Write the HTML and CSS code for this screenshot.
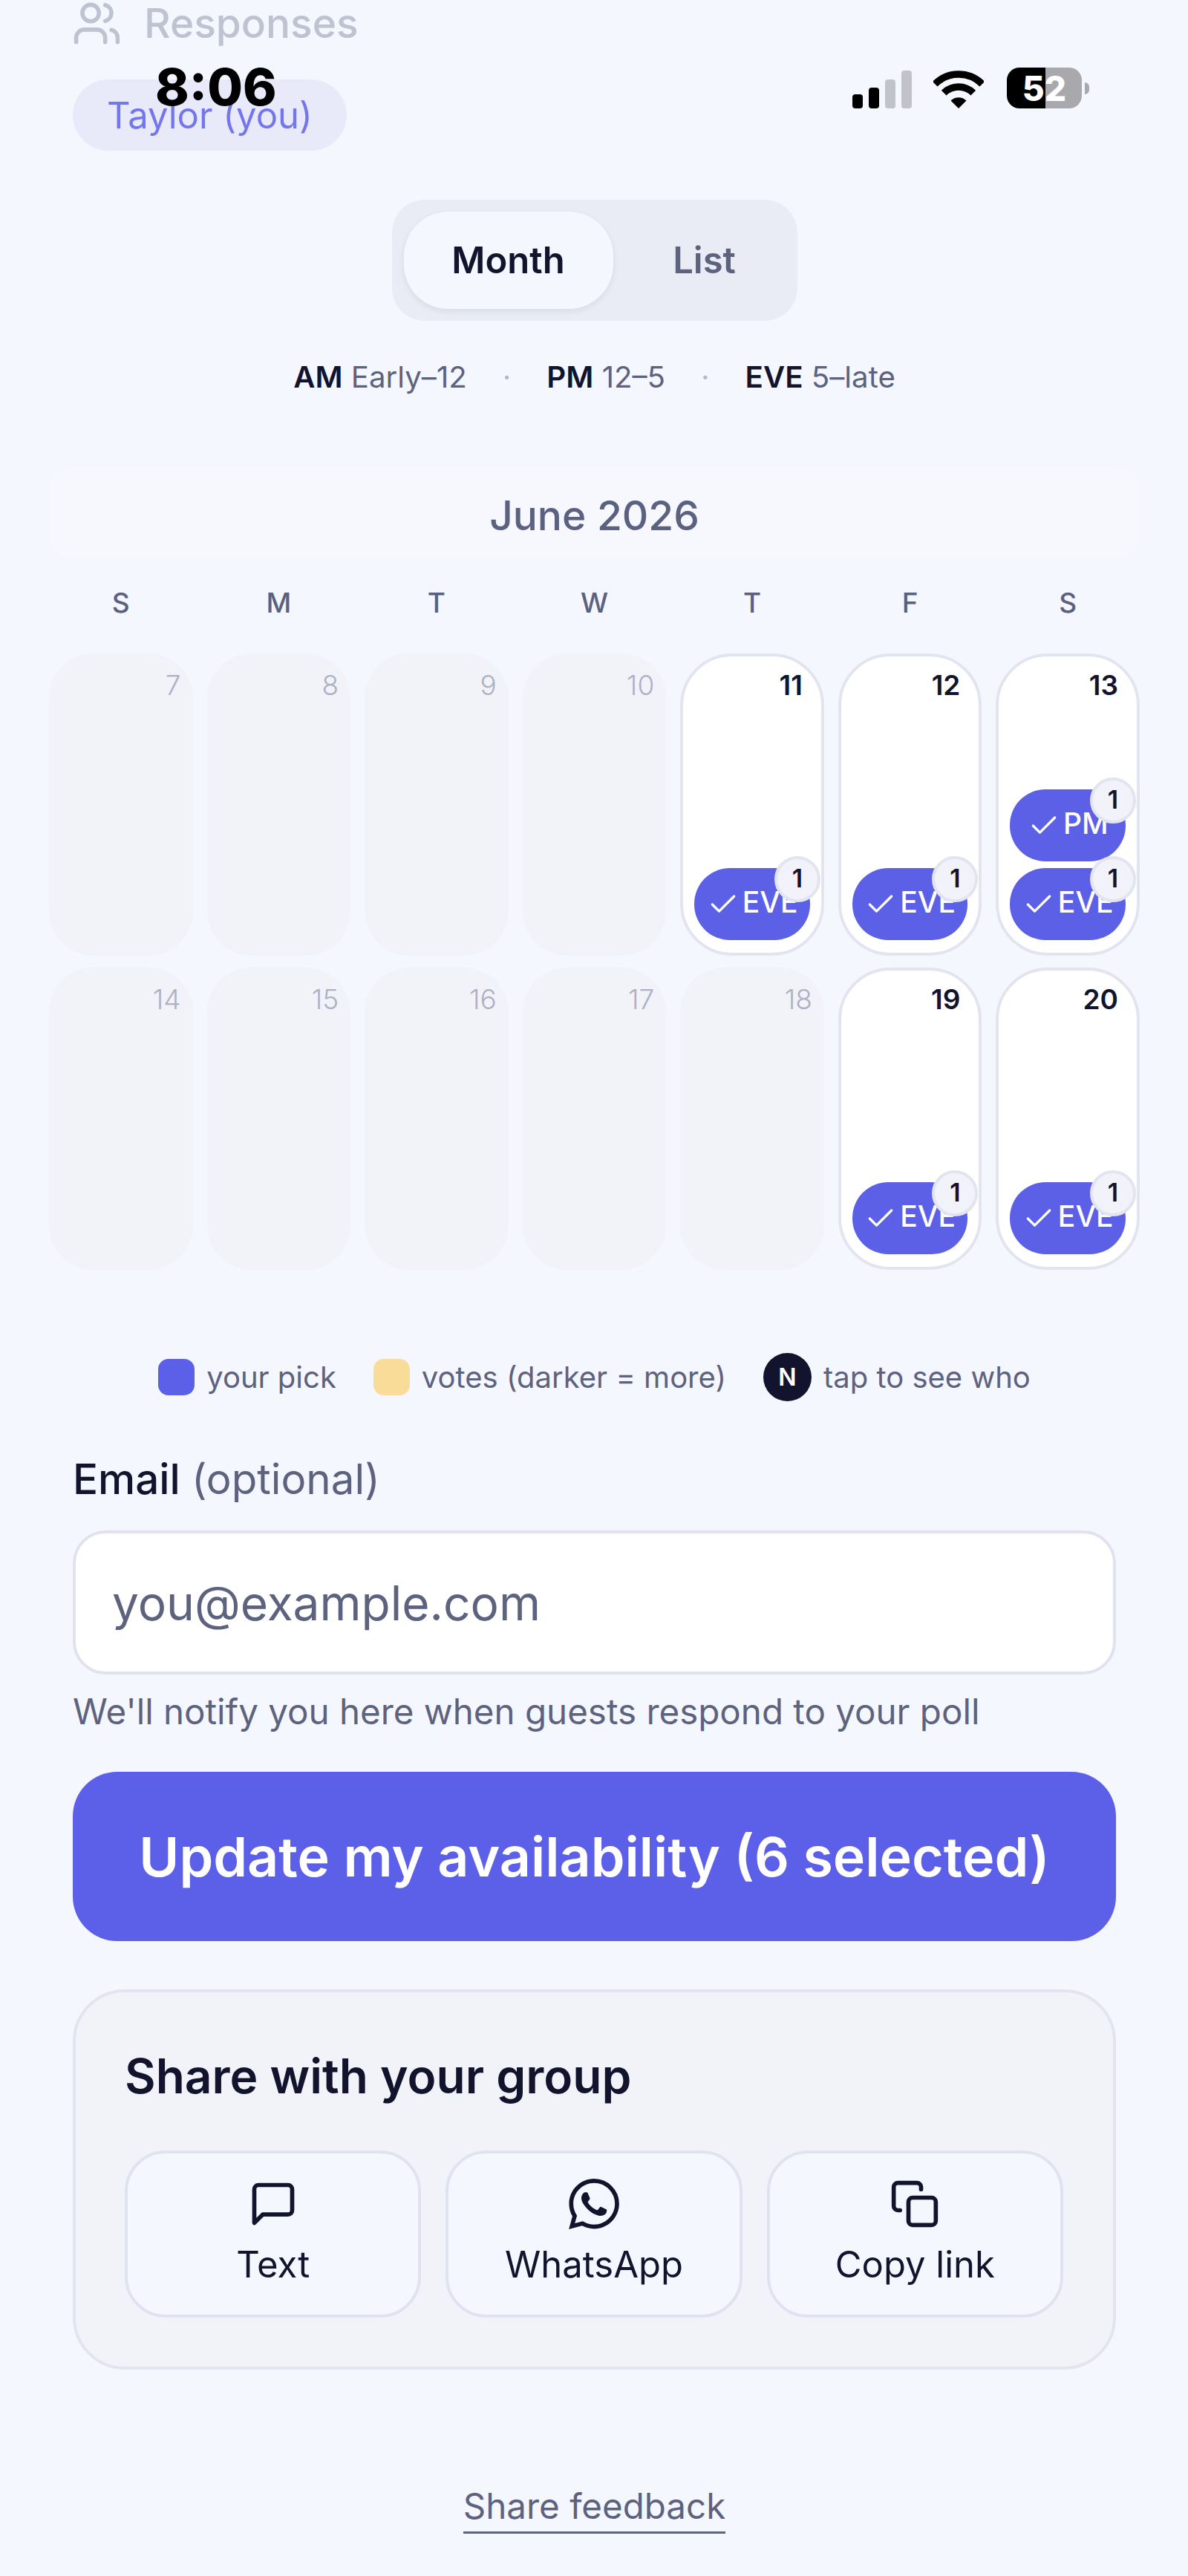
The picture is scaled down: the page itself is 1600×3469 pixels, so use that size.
FILE: index.html
```html
<!DOCTYPE html>
<html lang="en">
<head>
    <meta charset="UTF-8">
    <meta name="viewport" content="width=device-width, initial-scale=1.0">
    <title>June 2026 availability</title>
    <link rel="stylesheet" href="styles.css">
</head>
<body>
    <div class="status-bar">
        <span class="time">8:06</span>
        <div class="status-icons">
            <div class="signal">
                <span class="bar bar-1"></span>
                <span class="bar bar-2"></span>
                <span class="bar bar-3 off"></span>
                <span class="bar bar-4 off"></span>
            </div>
            <svg class="wifi" viewBox="0 0 68 51">
                <path d="M2.2 18.2A45 45 0 0 1 65.8 18.2M14.2 30.2A28 28 0 0 1 53.8 30.2" fill="none" stroke="#000" stroke-width="9.5"/>
                <path d="M34 51L23.5 40.5A15 15 0 0 1 44.5 40.5Z" fill="#000"/>
            </svg>
            <div class="battery"><span>52</span></div>
            <span class="battery-nub"></span>
        </div>
    </div>

    <main class="page">
        <div class="responses">
            <svg class="responses-icon" viewBox="0 0 24 24" fill="none" stroke="currentColor" stroke-width="2" stroke-linecap="round" stroke-linejoin="round">
                <path d="M16 21v-2a4 4 0 0 0-4-4H6a4 4 0 0 0-4 4v2"/>
                <circle cx="9" cy="7" r="4"/>
                <path d="M22 21v-2a4 4 0 0 0-3-3.87"/>
                <path d="M16 3.13a4 4 0 0 1 0 7.75"/>
            </svg>
            <span>Responses</span>
        </div>
        <div class="name-pill">Taylor (you)</div>

        <div class="view-toggle">
            <button class="toggle-btn active">Month</button>
            <button class="toggle-btn">List</button>
        </div>

        <div class="time-key">
            <span><b>AM</b> Early–12</span>
            <i>·</i>
            <span><b>PM</b> 12–5</span>
            <i>·</i>
            <span><b>EVE</b> 5–late</span>
        </div>

        <div class="calendar">
            <div class="month-title">June 2026</div>
            <div class="weekdays">
                <span>S</span><span>M</span><span>T</span><span>W</span><span>T</span><span>F</span><span>S</span>
            </div>
            <div class="days">
                <div class="day past"><span class="num">7</span></div>
                <div class="day past"><span class="num">8</span></div>
                <div class="day past"><span class="num">9</span></div>
                <div class="day past"><span class="num">10</span></div>
                <div class="day open">
                    <span class="num">11</span>
                    <div class="chip"><svg viewBox="0 0 24 24"><path d="M20 6L9 17l-5-5"/></svg>EVE<span class="count">1</span></div>
                </div>
                <div class="day open">
                    <span class="num">12</span>
                    <div class="chip"><svg viewBox="0 0 24 24"><path d="M20 6L9 17l-5-5"/></svg>EVE<span class="count">1</span></div>
                </div>
                <div class="day open">
                    <span class="num">13</span>
                    <div class="chip"><svg viewBox="0 0 24 24"><path d="M20 6L9 17l-5-5"/></svg>PM<span class="count">1</span></div>
                    <div class="chip"><svg viewBox="0 0 24 24"><path d="M20 6L9 17l-5-5"/></svg>EVE<span class="count">1</span></div>
                </div>
                <div class="day past"><span class="num">14</span></div>
                <div class="day past"><span class="num">15</span></div>
                <div class="day past"><span class="num">16</span></div>
                <div class="day past"><span class="num">17</span></div>
                <div class="day past"><span class="num">18</span></div>
                <div class="day open">
                    <span class="num">19</span>
                    <div class="chip"><svg viewBox="0 0 24 24"><path d="M20 6L9 17l-5-5"/></svg>EVE<span class="count">1</span></div>
                </div>
                <div class="day open">
                    <span class="num">20</span>
                    <div class="chip"><svg viewBox="0 0 24 24"><path d="M20 6L9 17l-5-5"/></svg>EVE<span class="count">1</span></div>
                </div>
            </div>
        </div>

        <div class="legend">
            <div class="legend-item"><span class="swatch pick"></span>your pick</div>
            <div class="legend-item"><span class="swatch votes"></span>votes (darker = more)</div>
            <div class="legend-item"><span class="legend-n">N</span>tap to see who</div>
        </div>

        <label class="email-label">Email <span>(optional)</span></label>
        <div class="email-input">you@example.com</div>
        <p class="hint">We'll notify you here when guests respond to your poll</p>

        <button class="submit">Update my availability (6 selected)</button>

        <section class="share-card">
            <h2>Share with your group</h2>
            <div class="share-options">
                <div class="share-btn">
                    <svg class="share-icon" viewBox="0 0 24 24" fill="none" stroke="currentColor" stroke-width="2" stroke-linecap="round" stroke-linejoin="round">
                        <path d="M21 15a2 2 0 0 1-2 2H7l-4 4V5a2 2 0 0 1 2-2h14a2 2 0 0 1 2 2z"/>
                    </svg>
                    Text
                </div>
                <div class="share-btn">
                    <svg class="share-icon" viewBox="0 0 24 24" fill="currentColor">
                        <path d="M17.472 14.382c-.297-.149-1.758-.867-2.03-.967-.273-.099-.471-.148-.67.15-.197.297-.767.966-.94 1.164-.173.199-.347.223-.644.075-.297-.15-1.255-.463-2.39-1.475-.883-.788-1.48-1.761-1.653-2.059-.173-.297-.018-.458.13-.606.134-.133.298-.347.446-.52.149-.174.198-.298.298-.497.099-.198.05-.371-.025-.52-.075-.149-.669-1.612-.916-2.207-.242-.579-.487-.5-.669-.51-.173-.008-.371-.01-.57-.01-.198 0-.52.074-.792.372-.272.297-1.04 1.016-1.04 2.479 0 1.462 1.065 2.875 1.213 3.074.149.198 2.096 3.2 5.077 4.487.709.306 1.262.489 1.694.625.712.227 1.36.195 1.871.118.571-.085 1.758-.719 2.006-1.413.248-.694.248-1.289.173-1.413-.074-.124-.272-.198-.57-.347m-5.421 7.403h-.004a9.87 9.87 0 01-5.031-1.378l-.361-.214-3.741.982.998-3.648-.235-.374a9.86 9.86 0 01-1.51-5.26c.001-5.45 4.436-9.884 9.888-9.884 2.64 0 5.122 1.03 6.988 2.898a9.825 9.825 0 012.893 6.994c-.003 5.45-4.437 9.884-9.885 9.884m8.413-18.297A11.815 11.815 0 0012.05 0C5.495 0 .16 5.335.157 11.892c0 2.096.547 4.142 1.588 5.945L.057 24l6.305-1.654a11.882 11.882 0 005.683 1.448h.005c6.554 0 11.89-5.335 11.893-11.893a11.821 11.821 0 00-3.48-8.413z"/>
                    </svg>
                    WhatsApp
                </div>
                <div class="share-btn">
                    <svg class="share-icon" viewBox="0 0 24 24" fill="none" stroke="currentColor" stroke-width="2" stroke-linecap="round" stroke-linejoin="round">
                        <rect x="9" y="9" width="13" height="13" rx="2"/>
                        <path d="M5 15H4a2 2 0 0 1-2-2V4a2 2 0 0 1 2-2h9a2 2 0 0 1 2 2v1"/>
                    </svg>
                    Copy link
                </div>
            </div>
        </section>

        <a class="feedback" href="#">Share feedback</a>
    </main>
</body>
</html>
```

FILE: styles.css
```css
* {
    box-sizing: border-box;
}
body {
    margin: 0;
    background: #f5f7fe;
    font-family: Inter, "Noto Sans", sans-serif;
    color: #12142e;
}
button {
    font-family: inherit;
    border: none;
}

/* status bar sits over the scrolled page */
.status-bar {
    position: absolute;
    top: 0;
    left: 0;
    width: 100%;
    z-index: 10;
}
.time {
    position: absolute;
    left: 209px;
    top: 78px;
    font-size: 69px;
    line-height: 78px;
    font-weight: 800;
    color: #000;
}
.status-icons {
    position: absolute;
    left: 1148px;
    top: 91px;
    display: flex;
    align-items: center;
    height: 55px;
}
.signal {
    display: flex;
    align-items: flex-end;
    gap: 8px;
    height: 51px;
    margin-top: 3px;
}
.bar {
    width: 14px;
    background: #000;
    border-radius: 4px;
}
.bar.off {
    background: #c2c3c8;
}
.bar-1 { height: 19px; }
.bar-2 { height: 28px; }
.bar-3 { height: 39px; }
.bar-4 { height: 51px; }
.wifi {
    width: 68px;
    height: 51px;
    margin-left: 29px;
    margin-top: 3px;
}
.battery {
    width: 101px;
    height: 55px;
    margin-left: 31px;
    border-radius: 17px;
    background: linear-gradient(to right, #000 0, #000 52px, #a9a9ad 52px);
    color: #fff;
    font-size: 46px;
    font-weight: 800;
    display: flex;
    align-items: center;
    justify-content: center;
}
.battery-nub {
    width: 6px;
    height: 16px;
    margin-left: 4px;
    background: #a9a9ad;
    border-radius: 0 8px 8px 0;
}

.page {
    display: flex;
    flex-direction: column;
    height: 3469px;
    padding: 0 97px 0 98px;
}
.responses {
    display: flex;
    align-items: center;
    gap: 30px;
    height: 62px;
    color: #bfc2d0;
    font-size: 55px;
    font-weight: 500;
}
.responses-icon {
    width: 67px;
    height: 67px;
    margin-left: -1px;
}
.name-pill {
    margin-top: 45px;
    width: 369px;
    height: 96px;
    border-radius: 48px;
    background: #e8eaf9;
    color: #7476ee;
    font-size: 49px;
    display: flex;
    align-items: center;
    justify-content: center;
}

.view-toggle {
    align-self: center;
    display: flex;
    width: 546px;
    height: 163px;
    margin-top: 66px;
    padding: 16px;
    border-radius: 44px;
    background: #e9ecf4;
}
.toggle-btn {
    background: none;
    font-size: 49px;
    font-weight: 600;
    color: #5d627f;
    flex: 1;
    padding: 0 0 0 14px;
}
.toggle-btn.active {
    flex: 0 0 282px;
    padding: 0;
    background: #f5f7fe;
    color: #12142e;
    border-radius: 60px;
    box-shadow: 0 3px 8px rgba(18, 20, 46, 0.08);
}

.time-key {
    display: flex;
    justify-content: center;
    align-items: center;
    gap: 48px;
    height: 54px;
    margin-top: 48px;
    font-size: 40.2px;
    color: #5d627f;
}
.time-key b {
    font-weight: 600;
    color: #12142e;
}
.time-key i {
    font-style: normal;
    color: #b4b7c8;
}

.calendar {
    margin: 0 -32px;
}
.month-title {
    margin-top: 96px;
    height: 122px;
    padding-top: 6px;
    border-radius: 30px;
    background: #f7f8fd;
    color: #5b6180;
    font-size: 55px;
    font-weight: 500;
    display: flex;
    align-items: center;
    justify-content: center;
}
.weekdays,
.days {
    display: grid;
    grid-template-columns: repeat(7, 1fr);
    column-gap: 19px;
}
.weekdays {
    height: 44px;
    margin-top: 38px;
    text-align: center;
    color: #5a6080;
    font-size: 37px;
    font-weight: 500;
    line-height: 44px;
}
.days {
    margin-top: 46px;
    row-gap: 16px;
}
.day {
    position: relative;
    display: flex;
    flex-direction: column;
    height: 407px;
}
.num {
    position: absolute;
    top: 21px;
    font-size: 37px;
    line-height: 44px;
}
.day.past {
    background: #f1f3f9;
    border-radius: 60px;
}
.day.past .num {
    right: 16px;
    color: #aeb1c6;
    font-weight: 300;
}
.day.open {
    justify-content: flex-end;
    gap: 9px;
    padding: 0 15px 17px;
    background: #fff;
    border: 4px solid #e2e4f0;
    border-radius: 70px;
}
.day.open .num {
    top: 17px;
    right: 25px;
    font-weight: 600;
}
.chip {
    position: relative;
    display: flex;
    align-items: center;
    justify-content: center;
    height: 97px;
    padding-bottom: 6px;
    border-radius: 48px;
    background: #5c60e6;
    color: #fff;
    font-size: 39px;
    font-weight: 500;
}
.chip svg {
    width: 44px;
    height: 44px;
    margin: 6px 4px 0 0;
    fill: none;
    stroke: #fff;
    stroke-width: 1.8;
    stroke-linecap: round;
    stroke-linejoin: round;
}
.count {
    position: absolute;
    top: -16px;
    right: -14px;
    width: 62px;
    height: 62px;
    border-radius: 50%;
    background: #f2f3fa;
    border: 4px solid #e2e4f0;
    color: #12142e;
    font-size: 34px;
    font-weight: 600;
    display: flex;
    align-items: center;
    justify-content: center;
    padding-bottom: 4px;
}

.legend {
    display: flex;
    justify-content: center;
    align-items: center;
    gap: 50px;
    height: 66px;
    margin-top: 111px;
    color: #5d627f;
    font-size: 40px;
}
.legend-item {
    display: flex;
    align-items: center;
    gap: 16px;
}
.swatch {
    width: 49px;
    height: 49px;
    border-radius: 14px;
}
.swatch.pick {
    background: #5c60e8;
}
.swatch.votes {
    background: #f8dc97;
}
.legend-n {
    width: 65px;
    height: 65px;
    border-radius: 50%;
    background: #12142e;
    color: #fff;
    font-size: 32px;
    font-weight: 600;
    display: flex;
    align-items: center;
    justify-content: center;
}

.email-label {
    margin-top: 70px;
    height: 70px;
    line-height: 70px;
    font-size: 56.5px;
    font-weight: 500;
}
.email-label span {
    font-weight: 400;
    color: #5d627f;
}
.email-input {
    margin-top: 34px;
    height: 194px;
    padding-left: 49px;
    display: flex;
    align-items: center;
    background: #fff;
    border: 4px solid #e0e3ef;
    border-radius: 44px;
    color: #5d627f;
    font-size: 64px;
}
.hint {
    margin: 22px 0 0;
    height: 56px;
    line-height: 56px;
    color: #5d627f;
    font-size: 47.5px;
}
.submit {
    margin-top: 53px;
    height: 228px;
    border-radius: 60px;
    background: #5c60e8;
    color: #fff;
    font-size: 73.5px;
    font-weight: 600;
}

.share-card {
    margin-top: 65px;
    height: 512px;
    padding: 0 67px 0 66px;
    background: #f1f3f9;
    border: 4px solid #e2e4f0;
    border-radius: 70px;
}
.share-card h2 {
    margin: 78px 0 0;
    height: 70px;
    line-height: 70px;
    font-size: 64px;
    font-weight: 600;
}
.share-options {
    display: grid;
    grid-template-columns: repeat(3, 1fr);
    gap: 33px;
    margin-top: 65px;
}
.share-btn {
    display: flex;
    flex-direction: column;
    align-items: center;
    height: 225px;
    padding-top: 34px;
    background: #f5f7fe;
    border: 4px solid #e0e3ef;
    border-radius: 55px;
    font-size: 49px;
    line-height: 60px;
}
.share-icon {
    width: 68px;
    height: 68px;
    margin-bottom: 18px;
}

.feedback {
    align-self: center;
    margin-top: 154px;
    padding-bottom: 4px;
    color: #5d627f;
    font-size: 47.5px;
    line-height: 60px;
    text-decoration: none;
    border-bottom: 3px solid #5d627f;
}
```
